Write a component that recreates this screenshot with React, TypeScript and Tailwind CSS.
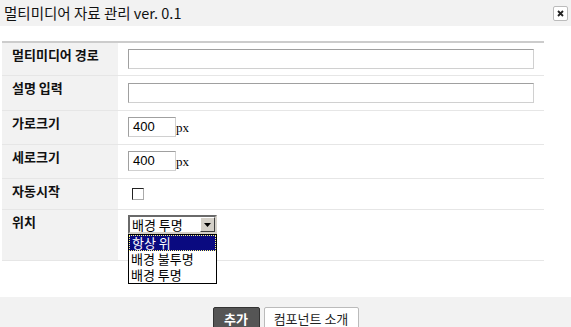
import React from 'react';

const kr = { fontFamily: '"Noto Sans CJK KR", "Noto Sans", sans-serif' };

const rows = [
  { label: '멀티미디어 경로', h: 'h-[32px]' },
  { label: '설명 입력', h: 'h-[34px]' },
  { label: '가로크기', h: 'h-[33px]' },
  { label: '세로크기', h: 'h-[33px]' },
  { label: '자동시작', h: 'h-[30px]' },
  { label: '위치', h: 'h-[50px]' },
];

function TextBox({ wide }: { wide?: boolean }) {
  return (
    <div
      className={`${wide ? 'w-[406px]' : 'w-[48px]'} h-[20px] bg-white border border-[#d0d0d0] border-t-[#a0a0a0] border-l-[#a0a0a0]`}
    />
  );
}

function SizeField() {
  return (
    <div className="flex items-end">
      <div className="w-[48px] h-[20px] bg-white border border-[#d0d0d0] border-t-[#a0a0a0] border-l-[#a0a0a0] pl-[4px] text-[13px] leading-[18px] text-black font-['Liberation_Sans',sans-serif]">
        400
      </div>
      <span className="text-[13px] leading-[14px] mb-[2px] text-black font-['Liberation_Serif',serif]">px</span>
    </div>
  );
}

function Position() {
  const opts = ['항상 위', '배경 불투명', '배경 투명'];
  return (
    <div className="relative w-[89px]">
      <div className="h-[19px] flex bg-white border-2 border-[#6a6a6a] border-r-[#d4d0c8] border-b-[#d4d0c8]">
        <span className="flex-1 pl-[2px] text-[13px] leading-[15px] text-black" style={kr}>
          배경 투명
        </span>
        <div className="w-[15px] h-[15px] bg-[#d4d0c8] border border-[#fff] border-r-[#404040] border-b-[#404040] flex items-center justify-center">
          <svg width="7" height="4" viewBox="0 0 7 4">
            <path d="M0 0h7L3.5 4z" fill="#000" />
          </svg>
        </div>
      </div>
      <div className="absolute left-0 top-[19px] w-[89px] bg-white border border-black">
        {opts.map((o, i) => (
          <div
            key={o}
            className={`h-[16px] pl-[2px] text-[13px] leading-[14px] ${
              i === 0 ? 'bg-[#0a0a80] text-white border border-dotted border-[#ffff80]' : 'text-black leading-[16px]'
            }`}
            style={kr}
          >
            {o}
          </div>
        ))}
      </div>
    </div>
  );
}

export default function App() {
  const controls = [
    <TextBox wide />,
    <TextBox wide />,
    <SizeField />,
    <SizeField />,
    <div className="mt-[3px] ml-[4px] w-[12px] h-[12px] bg-white border border-[#222] border-r-[#aaa] border-b-[#aaa]" />,
    <Position />,
  ];
  const tops = ['pt-[6px]', 'pt-[7px]', 'pt-[6px]', 'pt-[6px]', 'pt-[6px]', 'pt-[5px]'];

  return (
    <div className="w-[571px] h-[327px] overflow-hidden bg-white flex flex-col" style={kr}>
      {/* Header */}
      <div className="shrink-0 h-[26px] bg-[#f2f2f2] flex items-center justify-between pl-[4px] pr-[3px]">
        <span className="text-[14.5px] text-[#111]">멀티미디어 자료 관리 ver. 0.1</span>
        <div className="w-[15px] h-[15px] bg-white border border-[#bbb] rounded-[2px] flex items-center justify-center">
          <svg width="7" height="7" viewBox="0 0 7 7">
            <path d="M1 1l5 5M6 1L1 6" stroke="#222" strokeWidth="1.8" />
          </svg>
        </div>
      </div>

      {/* Form table */}
      <div className="shrink-0 mt-[15px] ml-[2px] w-[542px] border-t-2 border-[#cccccc]">
        {rows.map((r, i) => (
          <div key={r.label} className={`flex border-b border-[#e6e6e6] ${r.h} box-content`}>
            <div className="w-[116px] bg-[#f2f2f2] pl-[10px] pt-[4px] text-[13px] leading-[16px] font-bold text-[#111]">
              {r.label}
            </div>
            <div className={`flex-1 pl-[10px] ${tops[i]}`}>{controls[i]}</div>
          </div>
        ))}
      </div>

      {/* Footer */}
      <div className="shrink-0 mt-[36px] h-[31px] bg-[#f2f2f2] flex justify-center items-start gap-[4px] pt-[10px]">
        <button className="shrink-0 h-[24px] w-[47px] bg-[#555] border border-[#333] rounded-[2px] text-white text-[13px] font-bold leading-[20px]">
          추가
        </button>
        <button className="shrink-0 h-[24px] w-[95px] bg-white border border-[#bbb] rounded-[2px] text-[#222] text-[13px] leading-[20px]">
          컴포넌트 소개
        </button>
      </div>
    </div>
  );
}
